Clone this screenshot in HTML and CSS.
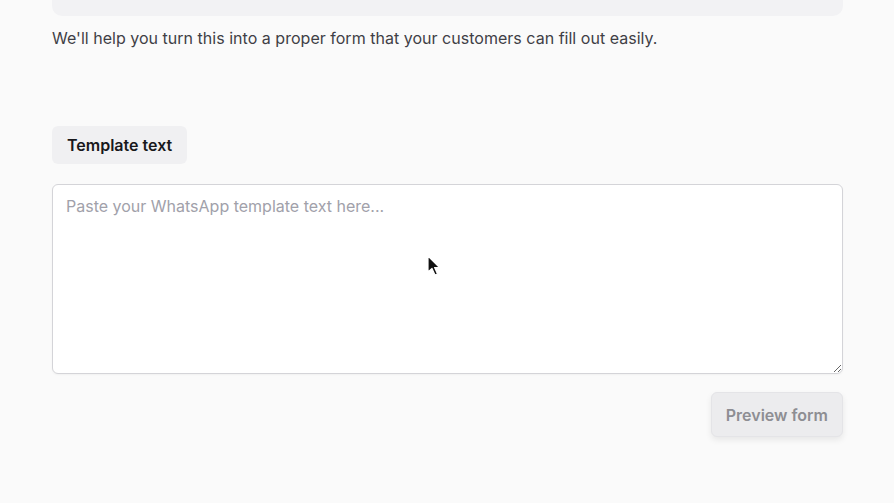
FILE: index.html
```html
<!DOCTYPE html>
<html>
<head>
<meta charset="utf-8">
<link rel="stylesheet" href="styles.css">
</head>
<body>
<main class="page">
  <div class="top-box"></div>
  <p class="intro">We'll help you turn this into a proper form that your customers can fill out easily.</p>
  <div class="tabs">
    <span class="tab">Template text</span>
  </div>
  <textarea class="template" placeholder="Paste your WhatsApp template text here..."></textarea>
  <div class="actions">
    <button class="preview" disabled>Preview form</button>
  </div>
  <svg class="cursor" width="14" height="22" viewBox="0 0 14 22"><path d="M1 1 L1 17 L5 13.5 L8 20 L10.5 19 L7.6 12.6 L12.5 12.6 Z" fill="#111" stroke="#fff" stroke-width="1.2" stroke-linejoin="round"/></svg>
</main>
</body>
</html>
```

FILE: styles.css
```css
html, body {
  margin: 0;
  padding: 0;
  background: #fafafa;
}
body {
  font-family: Inter, "Noto Sans", "Liberation Sans", sans-serif;
  color: #3f3f46;
}
.page {
  position: relative;
  width: 791px;
  margin-left: 52px;
  height: 503px;
}
.top-box {
  height: 16px;
  margin-top: 0;
  background: #f2f2f4;
  border-radius: 0 0 10px 10px;
}
.intro {
  margin: 12px 0 0;
  font-size: 16px;
  line-height: 20px;
  color: #3f3f46;
  letter-spacing: 0.02px;
}
.tabs {
  margin-top: 78px;
  display: flex;
}
.tab {
  display: inline-flex;
  align-items: center;
  height: 38px;
  padding: 0 15px;
  background: #f0f0f2;
  border-radius: 6px;
  font-size: 16px;
  font-weight: 600;
  color: #18181b;
}
.template {
  display: block;
  box-sizing: border-box;
  width: 791px;
  height: 190px;
  margin-top: 20px;
  padding: 11px 13px;
  border: 1.5px solid #d4d4d8;
  border-radius: 6px;
  background: #fff;
  font-family: inherit;
  font-size: 16px;
  line-height: 20px;
  resize: vertical;
  outline: none;
  box-shadow: 0 1px 2px rgba(0,0,0,0.04);
}
.template::placeholder {
  color: #a1a1aa;
}
.actions {
  display: flex;
  justify-content: flex-end;
  margin-top: 18px;
}
.preview {
  height: 45px;
  padding: 0 14px;
  border: 1px solid #e4e4e7;
  border-radius: 6px;
  background: #ececee;
  font-family: inherit;
  font-size: 16px;
  font-weight: 600;
  color: #8e8e93;
  box-shadow: 0 3px 6px rgba(0,0,0,0.08);
}
.cursor {
  position: absolute;
  left: 375px;
  top: 255px;
}
```
